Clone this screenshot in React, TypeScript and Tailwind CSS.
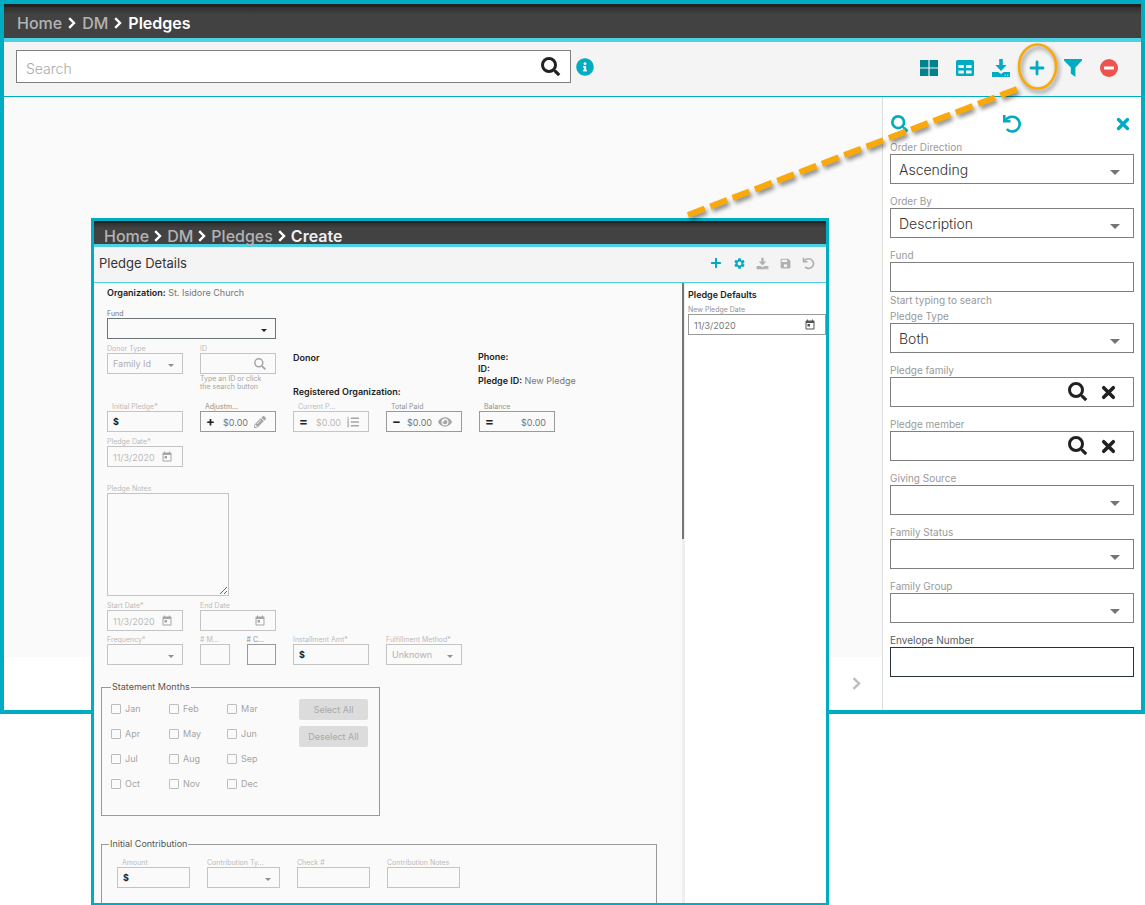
import { useId, type ReactNode } from "react";
import { FaEye, FaInfoCircle, FaListOl, FaPencilAlt } from "react-icons/fa";
import { MdSave, MdSettings, MdToday } from "react-icons/md";

type IconProps = { className?: string };

const SearchIcon = ({ className = "size-5" }: IconProps) => (
  <svg viewBox="0 0 20 20" className={className} fill="none" stroke="currentColor">
    <circle cx="8" cy="8" r="6.5" strokeWidth="3" />
    <path d="M12.6 12.6 14.6 14.6" strokeWidth="2.2" />
    <path d="M14.2 14.2 18.2 18.2" strokeWidth="3.2" />
  </svg>
);

const ThinSearchIcon = ({ className = "size-3" }: IconProps) => (
  <svg viewBox="0 0 12 12" className={className} fill="none" stroke="currentColor" strokeWidth="1.5">
    <circle cx="4.8" cy="4.8" r="4" />
    <path d="M7.8 7.8 11.4 11.4" strokeWidth="1.8" />
  </svg>
);

const TilesIcon = () => (
  <svg viewBox="0 0 20 20" className="size-5" fill="currentColor">
    <path d="M1 2h8.4v7.4H1zM10.6 2H19v7.4h-8.4zM1 10.6h8.4V18H1zM10.6 10.6H19V18h-8.4z" />
  </svg>
);

const TableIcon = () => (
  <svg viewBox="0 0 20 20" className="size-5">
    <rect x="1" y="2" width="18" height="16" rx="1.6" fill="currentColor" />
    <path d="M3.4 7h5.4v3H3.4zM11 7h5.6v3H11zM3.4 12.4h5.4v3H3.4zM11 12.4h5.6v3H11z" fill="#f4f4f4" />
  </svg>
);

const DownloadIcon = ({ className = "size-5" }: IconProps) => (
  <svg viewBox="0 0 20 20" className={className} fill="currentColor">
    <path d="M8.200 1h3.600v6h3.900L10 13 4.300 7h3.900z" />
    <path d="M1 14h6.200l2.800 2 2.800-2H19v5H1z" />
    <path d="M13.600 17.200h1.200M16.200 17.200h1.200" stroke="#f4f4f4" strokeWidth="1" />
  </svg>
);

const PlusIcon = ({ className = "size-5" }: IconProps) => (
  <svg viewBox="0 0 20 20" className={className} stroke="currentColor" strokeWidth="2.800" strokeLinecap="round">
    <path d="M10 4v12M4 10h12" />
  </svg>
);

const FilterIcon = () => (
  <svg viewBox="0 0 20 20" className="size-5" fill="currentColor">
    <path d="M1 1h18v1.600l-6.600 7V19L7.800 15.600v-6L1 2.600z" />
  </svg>
);

const RemoveIcon = () => (
  <svg viewBox="0 0 20 20" className="size-5">
    <circle cx="10" cy="10" r="9" fill="#ef5350" />
    <rect x="5" y="8.500" width="10" height="3" rx="0.500" fill="#fff" />
  </svg>
);

const UndoIcon = ({ className = "size-5" }: IconProps) => (
  <svg viewBox="0 0 20 20" className={className} fill="none" stroke="currentColor" strokeWidth="2.600">
    <path d="M2.300 1v6.300h6.200" />
    <path d="M2.800 6.900C4.600 3.900 7.400 2.600 10.600 2.700a7.400 7.400 0 1 1-5.800 12.400" />
  </svg>
);

const CrossIcon = ({ className = "size-4" }: IconProps) => (
  <svg viewBox="0 0 16 16" className={className} stroke="currentColor" strokeWidth="3.400" strokeLinecap="round">
    <path d="M3.500 3.500l9 9M12.500 3.500l-9 9" />
  </svg>
);

const Caret = ({ className = "" }: IconProps) => (
  <svg viewBox="0 0 10 5" className={`pointer-events-none absolute ${className}`} fill="currentColor">
    <path d="M0 0h10L5 5z" />
  </svg>
);

const Crumb = () => (
  <svg viewBox="0 0 8 12" className="h-3 w-2 text-white" fill="none" stroke="currentColor" strokeWidth="2.400">
    <path d="M1.200 1.200 6 6 1.200 10.800" />
  </svg>
);

function FilterField({ label, children, hint, active }: {
  label: string; children: (id: string) => ReactNode; hint?: string; active?: boolean;
}) {
  const id = useId();
  return (
    <div className={hint ? "" : "pb-[10px]"}>
      <label htmlFor={id} className={`block text-[10px] leading-[14px] ${active ? "text-[#546066]" : "text-[#9a9a9a]"}`}>{label}</label>
      <div className={`relative flex h-[30px] items-center border bg-white ${active ? "border-[#263238]" : "border-[#7f7f7f]"}`}>
        {children(id)}
      </div>
      {hint && <p className="h-[17px] pt-px text-[10px] leading-[14px] text-[#9a9a9a]">{hint}</p>}
    </div>
  );
}

function FilterSelect({ label, value = "" }: { label: string; value?: string }) {
  return (
    <FilterField label={label}>
      {(id) => (
        <>
          <select id={id} defaultValue={value} className="h-full w-full appearance-none bg-transparent px-2 pt-px text-[14px] font-light text-[#333] outline-none">
            <option value={value}>{value}</option>
          </select>
          <Caret className="right-[13px] top-[15px] h-[5px] w-[10px] text-[#757575]" />
        </>
      )}
    </FilterField>
  );
}

function FilterLookup({ label }: { label: string }) {
  return (
    <FilterField label={label}>
      {(id) => (
        <>
          <input id={id} type="text" className="h-full min-w-0 flex-1 px-2 text-[14px] outline-none" />
          <div className="flex items-center gap-3 pr-4 text-[#212121]">
            <button type="button" aria-label={`Search ${label}`}><SearchIcon /></button>
            <button type="button" aria-label={`Clear ${label}`}><CrossIcon className="size-[17px]" /></button>
          </div>
        </>
      )}
    </FilterField>
  );
}

type Tone = "off" | "mid" | "on";
const borderTone: Record<Tone, string> = { off: "border-[#c4c4c4]", mid: "border-[#9a9a9a]", on: "border-[#6d7478]" };
const labelTone: Record<Tone, string> = { off: "text-[#bababa]", mid: "text-[#929292]", on: "text-[#777]" };

function FormField({ label, tone = "off", indent, children }: {
  label: string; tone?: Tone; indent?: boolean; children: (id: string) => ReactNode;
}) {
  const id = useId();
  return (
    <div className="min-w-0">
      <label htmlFor={id} className={`block whitespace-nowrap text-[7px] leading-[8px] ${indent ? "pl-[5px]" : ""} ${labelTone[tone]}`}>{label}</label>
      <div className={`relative flex h-[21px] items-center border ${borderTone[tone]}`}>{children(id)}</div>
    </div>
  );
}

function FormText({ label, tone = "off", value = "", prefix, icon, indent, right }: {
  label: string; tone?: Tone; value?: string; prefix?: string; icon?: ReactNode; indent?: boolean; right?: boolean;
}) {
  return (
    <FormField label={label} tone={tone} indent={indent}>
      {(id) => (
        <>
          {prefix && (
            <span className={`pl-[5px] font-bold leading-none text-[#222] ${prefix === "$" ? "text-[9px]" : "text-[13px]"}`}>{prefix}</span>
          )}
          <input id={id} type="text" defaultValue={value}
            className={`h-full min-w-0 flex-1 bg-transparent pt-px text-[9px] outline-none ${right ? "pr-2 text-right" : ""} ${prefix ? "pl-1" : "pl-[5px]"} ${prefix && icon ? "pr-[6px] text-right" : ""} ${tone === "off" ? "text-[#bababa]" : "text-[#777]"}`} />
          {icon && <span className={`pr-[9px] ${tone === "on" ? "text-[#555]" : "text-[#a5a5a5]"}`}>{icon}</span>}
        </>
      )}
    </FormField>
  );
}

function FormSelect({ label, tone = "off", value = "" }: { label: string; tone?: Tone; value?: string }) {
  return (
    <FormField label={label} tone={tone}>
      {(id) => (
        <>
          <select id={id} defaultValue={value} className="h-full w-full appearance-none bg-transparent pl-[5px] pt-px text-[9px] text-[#b0b0b0] outline-none">
            <option value={value}>{value}</option>
          </select>
          <Caret className={`right-2 top-[10px] h-[3px] w-[6px] ${tone === "on" ? "text-[#222]" : "text-[#8f8f8f]"}`} />
        </>
      )}
    </FormField>
  );
}

const months = ["Jan", "Feb", "Mar", "Apr", "May", "Jun", "Jul", "Aug", "Sep", "Oct", "Nov", "Dec"];
const calendar = <MdToday className="size-3" />;
const row = "grid grid-cols-[repeat(5,76px)] gap-x-[17px]";

function CreateDialog() {
  return (
    <section aria-label="Create pledge" className="absolute left-[91px] top-[218px] w-[738px] overflow-hidden border-[3px] border-[#00acc1] bg-[#fafafa]">
      <header className="border-b-[3px] border-t-2 border-b-[#4dd0e1] border-t-[#222] bg-linear-to-b from-[#303030] to-[#424242] to-25%">
        <nav className="flex h-[21px] items-center gap-[5px] pl-[10px] pt-1 text-[16px] font-medium leading-[18px] text-[#b3b3b3]">
          <a href="#home">Home</a><Crumb /><a href="#dm">DM</a><Crumb /><a href="#pledges">Pledges</a><Crumb />
          <a href="#create" className="font-semibold text-[#f0f0f0]">Create</a>
        </nav>
      </header>
      <div className="flex h-9 items-center justify-between border-b border-[#4dd0e1] bg-[#f4f4f4] pb-[3px] pl-[5px] pr-[11px]">
        <h2 className="text-[13px] leading-4 text-[#333]">Pledge Details</h2>
        <div className="flex items-center gap-[10px] text-[#b0b0b0]">
          <button type="button" aria-label="Add" className="text-[#00acc1]"><PlusIcon className="size-[14px]" /></button>
          <button type="button" aria-label="Settings" className="text-[#00acc1]"><MdSettings className="size-[13px]" /></button>
          <button type="button" aria-label="Download"><DownloadIcon className="size-[13px]" /></button>
          <button type="button" aria-label="Save"><MdSave className="size-[13px]" /></button>
          <button type="button" aria-label="Undo"><UndoIcon className="size-[13px]" /></button>
        </div>
      </div>
      <div className="flex">
        <form className="min-w-0 flex-1 pt-1">
          <div className="pl-[13px]">
            <p className="text-[9px] leading-3 text-[#777]"><b className="font-semibold text-[#222]">Organization:</b> St. Isidore Church</p>
            <div className="mt-[11px] w-[169px]"><FormSelect label="Fund" tone="on" /></div>

            <div className="mt-[6px] flex gap-[17px]">
              <div className="w-[76px]"><FormSelect label="Donor Type" value="Family Id" /></div>
              <div className="w-[76px]">
                <FormText label="ID" icon={<ThinSearchIcon />} />
                <p className="whitespace-nowrap pt-px text-[7px] leading-[8px] text-[#a5a5a5]">Type an ID or click<br />the search button</p>
              </div>
              <div className="w-[168px] pt-[7px] text-[9px] font-semibold leading-3 text-[#222]">
                <p>Donor</p>
                <p className="mt-[22px]">Registered Organization:</p>
              </div>
              <div className="pt-[6px] text-[9px] font-semibold leading-3 text-[#222]">
                <p>Phone:</p>
                <p>ID:</p>
                <p>Pledge ID: <span className="font-normal text-[#777]">New Pledge</span></p>
              </div>
            </div>

            <div className={`mt-[5px] ${row}`}>
              <FormText label="Initial Pledge*" prefix="$" indent />
              <FormText label="Adjustm..." tone="mid" prefix="+" value="$0.00" indent icon={<FaPencilAlt className="size-3" />} />
              <FormText label="Current P..." prefix="=" value="$0.00" indent icon={<FaListOl className="size-3" />} />
              <FormText label="Total Paid" tone="mid" prefix="−" value="$0.00" indent icon={<FaEye className="size-[14px]" />} />
              <FormText label="Balance" tone="mid" prefix="=" value="$0.00" indent right />
            </div>
            <div className={`mt-[6px] ${row}`}><FormText label="Pledge Date*" value="11/3/2020" icon={calendar} /></div>

            <div className="mt-[18px] w-[122px]">
              <label htmlFor="notes" className="block text-[7px] leading-[8px] text-[#bababa]">Pledge Notes</label>
              <textarea id="notes" className="block h-[103px] w-full resize border border-[#c4c4c4] bg-transparent p-1 text-[9px] outline-none" />
            </div>

            <div className={`mt-[6px] ${row}`}>
              <FormText label="Start Date*" value="11/3/2020" icon={calendar} />
              <FormText label="End Date" icon={calendar} />
            </div>
            <div className={`mt-[5px] ${row}`}>
              <FormSelect label="Frequency*" />
              <div className="grid grid-cols-2 gap-[17px]">
                <FormText label="# M..." />
                <FormText label="# C..." tone="mid" />
              </div>
              <FormText label="Installment Amt*" prefix="$" />
              <FormSelect label="Fulfillment Method*" value="Unknown" />
            </div>
          </div>

          <fieldset className="ml-[7px] mt-4 flex h-[135px] w-[279px] border border-[#999]">
            <legend className="ml-[9px] px-px text-[9px] leading-3 text-[#555]">Statement Months</legend>
            <div className="ml-[9px] mt-[3px] grid h-fit w-[188px] grid-cols-[58px_58px_1fr] text-[9px] text-[#a5a5a5]">
              {months.map((m) => (
                <label key={m} className="flex h-[25px] items-center gap-1">
                  <input type="checkbox" className="size-[10px] appearance-none rounded-[1px] border border-[#bdbdbd]" />
                  {m}
                </label>
              ))}
            </div>
            <div className="mt-[6px] flex w-[69px] flex-col gap-[6px] text-[9px] text-[#a8a8a8]">
              <button type="button" className="h-[21px] rounded-[2px] bg-[#dcdcdc]">Select All</button>
              <button type="button" className="h-[21px] rounded-[2px] bg-[#dcdcdc]">Deselect All</button>
            </div>
          </fieldset>

          <fieldset className="ml-[7px] mr-[25px] mt-[22px] border border-b-0 border-[#999] pb-[15px]">
            <legend className="ml-[7px] px-px text-[9px] leading-3 text-[#555]">Initial Contribution</legend>
            <div className="grid grid-cols-[repeat(4,73px)] gap-x-[17px] pl-[15px] pt-[9px]">
              <FormText label="Amount" prefix="$" indent />
              <FormSelect label="Contribution Ty..." />
              <FormText label="Check #" />
              <FormText label="Contribution Notes" />
            </div>
          </fieldset>
        </form>
        <div className="w-[3px] bg-[#eee]"><div className="h-64 w-[2px] bg-[#777]" /></div>
        <aside className="w-[141px] bg-white pl-[3px] pt-[6px]">
          <h3 className="text-[9px] font-semibold leading-3 text-[#222]">Pledge Defaults</h3>
          <div className="pt-[5px]"><FormText label="New Pledge Date" tone="mid" value="11/3/2020" icon={<MdToday className="size-3 text-[#555]" />} /></div>
        </aside>
      </div>
    </section>
  );
}

export default function App() {
  return (
    <div className="relative min-h-screen bg-white font-['Inter',sans-serif]">
      <main className="border-4 border-[#00acc1]">
        <header className="border-b-4 border-t-[3px] border-b-[#4dd0e1] border-t-[#222] bg-linear-to-b from-[#303030] to-[#424242] to-25%">
          <nav className="flex h-[31px] items-center gap-[6px] pl-[13px] text-[16px] font-medium text-[#b3b3b3]">
            <a href="#home">Home</a><Crumb /><a href="#dm">DM</a><Crumb />
            <a href="#pledges" className="font-semibold text-white">Pledges</a>
          </nav>
        </header>
        <div className="flex items-center justify-between border-b border-[#00acc1] bg-[#f4f4f4] pb-[13px] pl-3 pr-[22px] pt-2">
          <div className="flex items-center gap-[5px]">
            <div className="flex h-[33px] w-[555px] items-center border border-[#7f7f7f] bg-white pr-[9px]">
              <input type="text" aria-label="Search" placeholder="Search" className="h-full min-w-0 flex-1 px-[9px] pt-1 text-[14px] font-light outline-none placeholder:text-[#aaa]" />
              <button type="button" aria-label="Run search" className="text-[#212121]"><SearchIcon /></button>
            </div>
            <FaInfoCircle className="size-[18px] text-[#00acc1]" />
          </div>
          <div className="flex items-center gap-4 pt-0.5 text-[#00acc1]">
            <button type="button" aria-label="Tiles" className="text-[#00838f]"><TilesIcon /></button>
            <button type="button" aria-label="Table"><TableIcon /></button>
            <button type="button" aria-label="Download"><DownloadIcon /></button>
            <button type="button" aria-label="Add pledge"><PlusIcon /></button>
            <button type="button" aria-label="Filter"><FilterIcon /></button>
            <button type="button" aria-label="Remove"><RemoveIcon /></button>
          </div>
        </div>

        <div className="flex">
          <div className="flex flex-1 flex-col">
            <div className="flex-1 bg-[#fafafa]" />
            <div className="flex h-[53px] items-center justify-end pr-[21px]">
              <button type="button" aria-label="Next page" className="text-[#bdbdbd]">
                <svg viewBox="0 0 9 13" className="h-[13px] w-[9px]" fill="none" stroke="currentColor" strokeWidth="2.400">
                  <path d="M1.500 1.200 7 6.500 1.500 11.800" />
                </svg>
              </button>
            </div>
          </div>
          <aside className="w-[259px] border-l border-[#dcdcdc] bg-white px-[7px] pb-[23px]">
            <div className="flex h-[43px] items-center justify-between pl-px pr-[3px] pt-[11px] text-[#00acc1]">
              <button type="button" aria-label="Apply filters"><SearchIcon className="size-[18px]" /></button>
              <button type="button" aria-label="Reset filters"><UndoIcon /></button>
              <button type="button" aria-label="Close filters"><CrossIcon /></button>
            </div>
            <FilterSelect label="Order Direction" value="Ascending" />
            <FilterSelect label="Order By" value="Description" />
            <FilterField label="Fund" hint="Start typing to search">
              {(id) => <input id={id} type="text" className="h-full w-full px-2 text-[14px] outline-none" />}
            </FilterField>
            <FilterSelect label="Pledge Type" value="Both" />
            <FilterLookup label="Pledge family" />
            <FilterLookup label="Pledge member" />
            <FilterSelect label="Giving Source" />
            <FilterSelect label="Family Status" />
            <FilterSelect label="Family Group" />
            <FilterField label="Envelope Number" active>
              {(id) => <input id={id} type="text" className="h-full w-full px-2 text-[14px] outline-none" />}
            </FilterField>
          </aside>
        </div>
      </main>

      <CreateDialog />

      <svg className="pointer-events-none absolute left-[680px] top-10 h-[190px] w-[390px] drop-shadow-[2px_3px_2px_rgba(0,0,0,0.45)]" viewBox="0 0 390 190" fill="none" stroke="#f9a90c">
        <ellipse cx="357.500" cy="26.500" rx="18.500" ry="22" strokeWidth="2.600" />
        <path d="M8 175 337 49" strokeWidth="6" strokeDasharray="18 5.900" />
      </svg>
    </div>
  );
}
